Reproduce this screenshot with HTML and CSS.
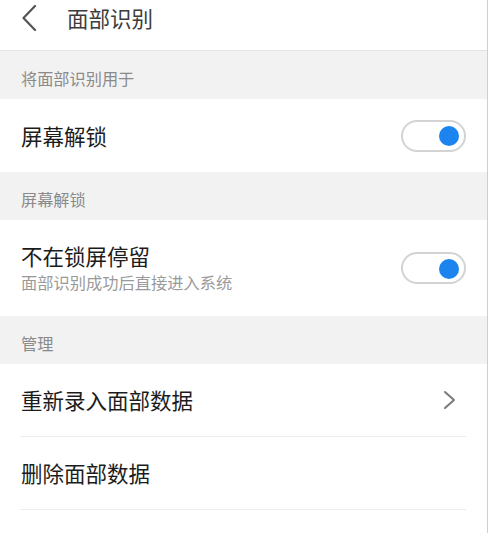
FILE: index.html
```html
<!DOCTYPE html>
<html lang="zh">
<head>
<meta charset="utf-8">
<title>面部识别</title>
<link rel="stylesheet" href="styles.css">
</head>
<body>
<div class="page">
  <header class="topbar">
    <svg class="back" width="16" height="26" viewBox="0 0 16 26"><path d="M14 1 L2.5 13 L14 25" fill="none" stroke="#555" stroke-width="2.2" stroke-linecap="round" stroke-linejoin="round"/></svg>
    <h1 class="title">面部识别</h1>
  </header>

  <div class="section">将面部识别用于</div>
  <div class="row">
    <div class="row-text"><div class="row-title">屏幕解锁</div></div>
    <div class="switch on"><span class="knob"></span></div>
  </div>

  <div class="section">屏幕解锁</div>
  <div class="row tall">
    <div class="row-text">
      <div class="row-title">不在锁屏停留</div>
      <div class="row-sub">面部识别成功后直接进入系统</div>
    </div>
    <div class="switch on"><span class="knob"></span></div>
  </div>

  <div class="section">管理</div>
  <div class="row divided">
    <div class="row-text"><div class="row-title">重新录入面部数据</div></div>
    <svg class="chev" width="14" height="20" viewBox="0 0 14 20"><path d="M2 2 L11 10 L2 18" fill="none" stroke="#7a7a7a" stroke-width="2" stroke-linecap="round" stroke-linejoin="round"/></svg>
  </div>
  <div class="row divided">
    <div class="row-text"><div class="row-title">删除面部数据</div></div>
  </div>
</div>
</body>
</html>
```

FILE: styles.css
```css
html, body {
  margin: 0;
  padding: 0;
  background: #ffffff;
}
body {
  font-family: "Noto Sans CJK SC", "Noto Sans", sans-serif;
}
.page {
  width: 488px;
  height: 533px;
  box-sizing: border-box;
  border-right: 1px solid #cfcfcf;
  overflow: hidden;
}
.topbar {
  height: 51px;
  box-sizing: border-box;
  border-bottom: 1px solid #e4e4e4;
  display: flex;
  align-items: flex-start;
  padding-top: 5px;
}
.back {
  margin-left: 21px;
  flex: none;
}
.title {
  margin: 0 0 0 30px;
  font-size: 21.5px;
  font-weight: normal;
  line-height: 26px;
  color: #3c3c3c;
}
.section {
  height: 48px;
  box-sizing: border-box;
  background: #f2f2f2;
  padding: 17px 0 0 21px;
  font-size: 16.2px;
  line-height: 20px;
  color: #8a8a8a;
}
.row {
  height: 73px;
  display: flex;
  align-items: center;
  padding-left: 21px;
  padding-right: 21px;
}
.row.tall {
  height: 96px;
}
.row.divided {
  height: 72px;
  margin-right: 21px;
  padding-right: 0;
  margin-left: 20px;
  padding-left: 1px;
  border-bottom: 1px solid #ececec;
}
.row-text {
  flex: 1;
  display: flex;
  flex-direction: column;
  gap: 2px;
}
.row-title {
  font-size: 21.5px;
  line-height: 26px;
  color: #1c1c1c;
}
.row-sub {
  font-size: 16.25px;
  line-height: 22px;
  color: #9a9a9a;
}
.switch {
  width: 65px;
  height: 32px;
  box-sizing: border-box;
  border: 2px solid #d3d3d3;
  border-radius: 16px;
  position: relative;
  flex: none;
  background: #fff;
}
.switch .knob {
  position: absolute;
  top: 4.5px;
  right: 5px;
  width: 20px;
  height: 20px;
  border-radius: 50%;
  background: #1b84ee;
}
.chev {
  flex: none;
  margin-right: 9px;
}
```
